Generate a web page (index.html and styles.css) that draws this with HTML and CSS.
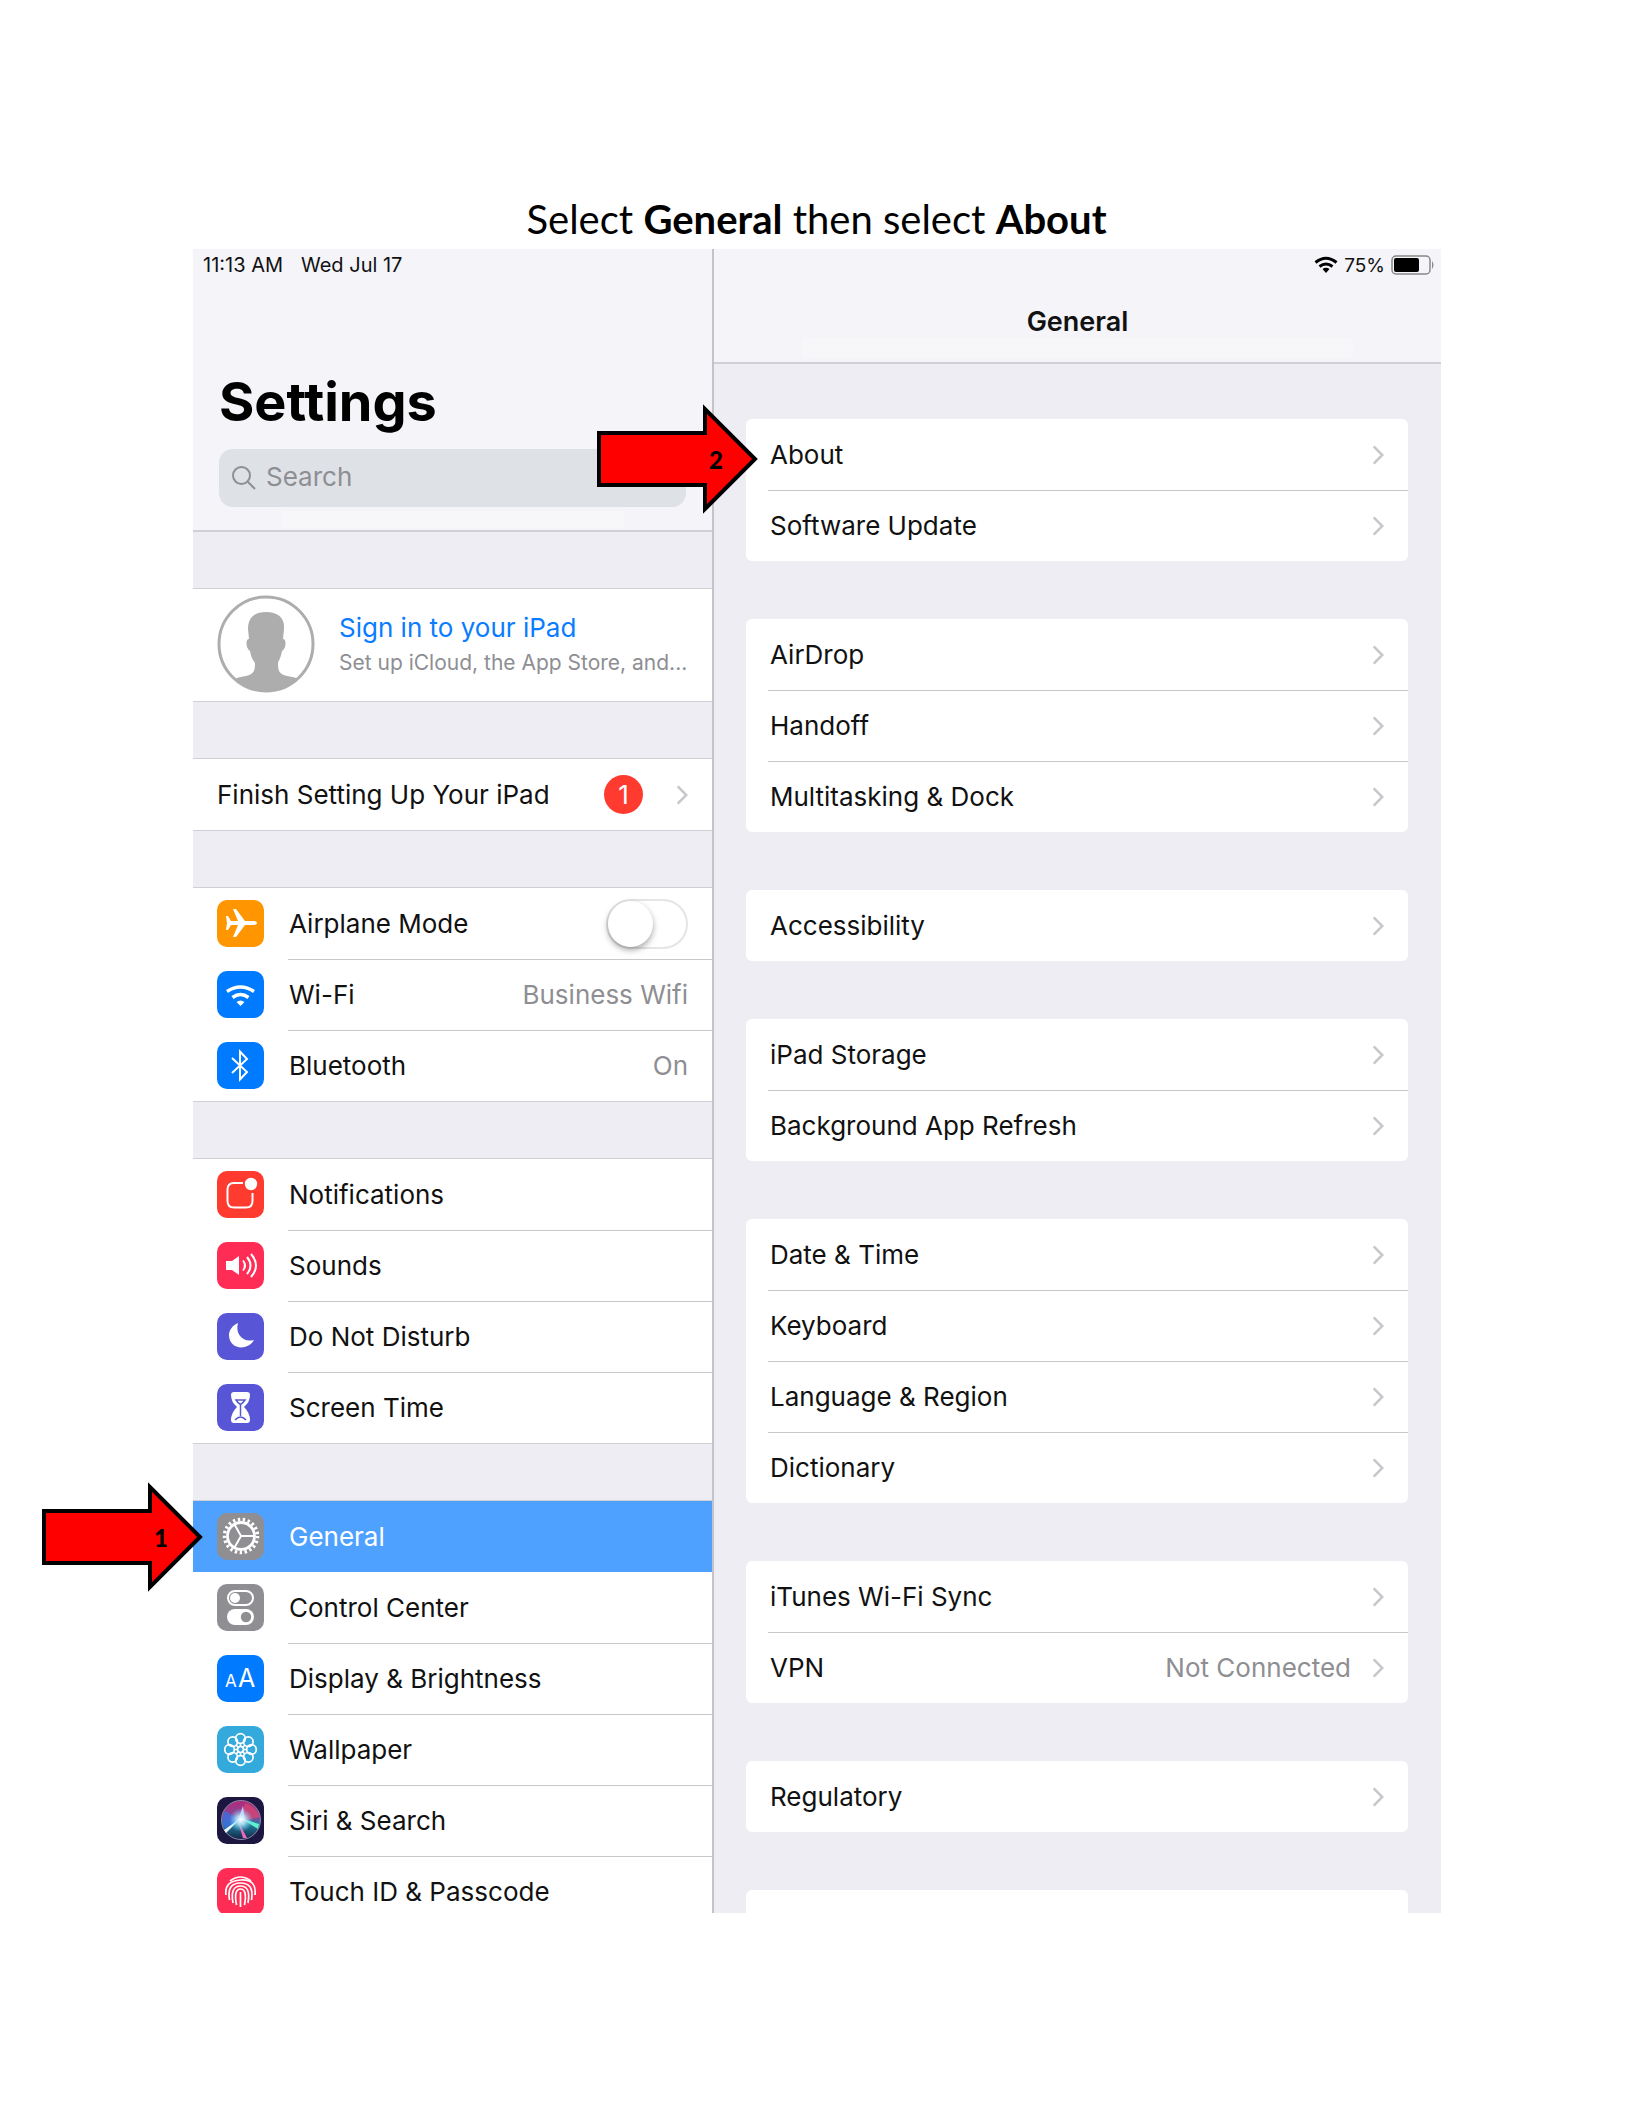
FILE: index.html
```html
<!DOCTYPE html>
<html lang="en">
<head>
    <meta charset="UTF-8">
    <title>Select General then select About</title>
    <meta name="viewport" content="width=device-width, initial-scale=1">
    <link rel="stylesheet" href="styles.css">
</head>
<body>
<svg class="defs" aria-hidden="true">
    <symbol id="chevron" viewBox="0 0 14 24"><path d="M2 2l10 10L2 22" fill="none" stroke="#c7c7cc" stroke-width="3"/></symbol>
    <symbol id="arrow" viewBox="0 0 160 108" overflow="visible"><path d="M2 28h106V4l50 50-50 50V80H2z" fill="#f00" stroke="#000" stroke-width="4"/></symbol>
</svg>

<h1 class="caption">Select <b>General</b> then select <b>About</b></h1>

<main class="stage">
<div class="screen">
    <!-- left column -->
    <aside class="sidebar">
        <header class="side-head">
            <div class="status"><span>11:13 AM</span><span>Wed Jul 17</span></div>
            <h2>Settings</h2>
            <label class="search">
                <svg width="26" height="26" viewBox="0 0 26 26" fill="none" stroke="#8e8e93" stroke-width="2"><circle cx="10.500" cy="10.500" r="8.500"/><path d="M17 17l7 7"/></svg>
                <input type="search" placeholder="Search" aria-label="Search">
            </label>
            <div class="sheen"></div>
        </header>

        <div class="group">
            <a class="profile" href="#">
                <svg width="98" height="98" viewBox="0 0 98 98">
                    <clipPath id="face"><circle cx="49" cy="49" r="47"/></clipPath>
                    <path clip-path="url(#face)" fill="#adadad" d="M49 17c12 0 19 6 18 17l-1 10c4 0 3 10-1 12-1 6-3 9-4 12 0 8 1 11 9 13 8 1 12 3 16 6v15H13V87c4-3 8-5 16-6 8-2 9-5 9-13-2-3-4-6-5-12-4-2-5-12-1-12l-1-10c0-12 7-17 18-17z"/>
                    <circle cx="49" cy="49" r="47" fill="none" stroke="#adadad" stroke-width="3"/>
                </svg>
                <span class="who"><span class="signin">Sign in to your iPad</span><small>Set up iCloud, the App Store, and...</small></span>
            </a>
        </div>

        <div class="group">
            <a class="row" href="#"><span class="label">Finish Setting Up Your iPad</span><span class="badge">1</span><svg class="chev"><use href="#chevron"/></svg></a>
        </div>

        <div class="group">
            <div class="row">
                <svg class="icon orange" viewBox="0 0 47 47"><path fill="#fff" d="M40 23c0 1.300-1.500 2-3 2h-9l-9 12h-3l5-12h-7l-3 5h-2l1-7-1-7h2l3 5h7L16 9h3l9 12h9c1.500 0 3 .7 3 2z"/></svg>
                <label class="label" for="airplane">Airplane Mode</label>
                <input class="toggle" type="checkbox" id="airplane">
            </div>
            <a class="row" href="#">
                <svg class="icon blue" viewBox="0 0 47 47"><g fill="none" stroke="#fff" stroke-width="3.500"><path d="M10 20.500q13.500-9 27 0"/><path d="M15.500 26.500q8-6 16 0"/></g><path fill="#fff" d="M19.500 31q4-3 8 0l-4 4z"/></svg>
                <span class="label">Wi-Fi</span><span class="value">Business Wifi</span>
            </a>
            <a class="row" href="#">
                <svg class="icon blue" viewBox="0 0 47 47"><path fill="none" stroke="#fff" stroke-width="2" d="M15 16l15 14-7 7.500v-28l7 7.500L15 31"/></svg>
                <span class="label">Bluetooth</span><span class="value">On</span>
            </a>
        </div>

        <div class="group">
            <a class="row" href="#">
                <svg class="icon red" viewBox="0 0 47 47"><path fill="none" stroke="#fff" stroke-width="2" d="M26 12h-9q-6.500 0-6.500 6.500V30q0 6.500 6.500 6.500h12q6.500 0 6.500-6.500v-8"/><circle cx="34" cy="13" r="6.200" fill="#fff"/></svg>
                <span class="label">Notifications</span>
            </a>
            <a class="row" href="#">
                <svg class="icon pink" viewBox="0 0 47 47"><path fill="#fff" d="M9 19h6l7-5v19l-7-5H9z"/><g fill="none" stroke="#fff" stroke-width="2"><path d="M26 18.500q4 5 0 10"/><path d="M30 15q7 8.500 0 17"/><path d="M34 12q10 11.500 0 23"/></g></svg>
                <span class="label">Sounds</span>
            </a>
            <a class="row" href="#">
                <svg class="icon purple" viewBox="0 0 47 47"><path fill="#fff" d="M21 10c-3 10 4 20 16 17C31 38 12 37 12 22c0-5 4-10 9-12z"/></svg>
                <span class="label">Do Not Disturb</span>
            </a>
            <a class="row" href="#">
                <svg class="icon purple" viewBox="0 0 47 47"><path fill="#fff" d="M17 8h13q3 0 3 3 0 7-6 12 6 6 6 13 0 3-3 3H17q-3 0-3-3 0-7 6-13-6-5-6-12 0-3 3-3z"/><path d="M19 16q2 3 4.500 4.500Q26 19 28 16zm4.500 5v11M18 36q5.500-6 11 0" fill="none" stroke="#5856d6" stroke-width="1.500"/></svg>
                <span class="label">Screen Time</span>
            </a>
        </div>

        <div class="group">
            <a class="row active" href="#">
                <svg class="icon gray" viewBox="0 0 47 47"><g fill="none" stroke="#fff"><circle cx="24" cy="23" r="16.500" stroke-width="3.500" stroke-dasharray="2.400 2.536"/><circle cx="24" cy="23" r="13.500" stroke-width="2.800"/><path stroke-width="2" d="M24 23h13M24 23l-6.500-11.500M24 23l-6.500 11.500"/></g></svg>
                <span class="label">General</span>
            </a>
            <a class="row" href="#">
                <svg class="icon gray" viewBox="0 0 47 47"><rect x="11" y="7" width="25" height="14" rx="7" fill="none" stroke="#fff" stroke-width="2"/><circle cx="18" cy="14" r="5" fill="#fff"/><rect x="10" y="25" width="27" height="16" rx="8" fill="#fff"/><circle cx="29" cy="33" r="5.200" fill="#8e8e93"/></svg>
                <span class="label">Control Center</span>
            </a>
            <a class="row" href="#">
                <svg class="icon blue" viewBox="0 0 47 47"><text x="8" y="32" class="aa-small">A</text><text x="21" y="32" class="aa-big">A</text></svg>
                <span class="label">Display &amp; Brightness</span>
            </a>
            <a class="row" href="#">
                <svg class="icon sky" viewBox="0 0 47 47"><g fill="none" stroke="#fff" stroke-width="1.700"><circle cx="23.500" cy="12.500" r="4.800"/><circle cx="31.300" cy="15.700" r="4.800"/><circle cx="34.500" cy="23.500" r="4.800"/><circle cx="31.300" cy="31.300" r="4.800"/><circle cx="23.500" cy="34.500" r="4.800"/><circle cx="15.700" cy="31.300" r="4.800"/><circle cx="12.500" cy="23.500" r="4.800"/><circle cx="15.700" cy="15.700" r="4.800"/><circle cx="23.500" cy="23.500" r="3"/><path d="M23.500 17v4M23.500 26v4M17 23.500h4M26 23.500h4M19 19l3 3M28 19l-3 3M19 28l3-3M28 28l-3-3"/></g></svg>
                <span class="label">Wallpaper</span>
            </a>
            <a class="row" href="#">
                <svg class="icon siri" viewBox="0 0 47 47">
                    <defs>
                        <linearGradient id="orb" x1="0" y1="0" x2="0" y2="1"><stop offset="0" stop-color="#b02a78"/><stop offset=".45" stop-color="#7f4c9c"/><stop offset=".6" stop-color="#1f7f9c"/><stop offset="1" stop-color="#142448"/></linearGradient>
                        <radialGradient id="glow"><stop offset="0" stop-color="#fff"/><stop offset=".4" stop-color="#bdefff" stop-opacity=".8"/><stop offset="1" stop-color="#6cf" stop-opacity="0"/></radialGradient>
                    </defs>
                    <circle cx="24" cy="23" r="19.500" fill="url(#orb)" stroke="#8d86a8"/>
                    <path fill="#3b6fe0" opacity=".8" d="M24 24L8 14q-5 10 0 18z"/>
                    <path fill="#e0446e" d="M24 24l4-18q12 4 15 14z" opacity=".7"/>
                    <path fill="#5ff0d0" d="M23 21l19 6-1 5z"/>
                    <path fill="#e8f6ff" d="M24 21L7 33l2 3z"/>
                    <path fill="#f06ab8" d="M21 24l5 17h4z"/>
                    <path fill="#e6c6ff" d="M21 23l5-14 2 14z"/>
                    <circle cx="24" cy="23" r="12" fill="url(#glow)"/>
                </svg>
                <span class="label">Siri &amp; Search</span>
            </a>
            <a class="row" href="#">
                <svg class="icon pink" viewBox="0 0 47 47"><g fill="none" stroke="#fff" stroke-width="1.700"><path d="M13 13q10.500-8 21 0"/><path d="M9 27q-2-14 14.500-15T38 27"/><path d="M12.500 32q-3-17 11-17t11 17"/><path d="M16 35q-3-17 7.500-17T31 35"/><path d="M19.500 37q-3-16 4-16t4 16"/><path d="M23.500 24v15"/></g></svg>
                <span class="label">Touch ID &amp; Passcode</span>
            </a>
        </div>
    </aside>

    <!-- right column -->
    <section class="detail">
        <header class="detail-head">
            <div class="status right">
                <svg width="24" height="18" viewBox="0 0 24 18"><g fill="none" stroke="#000" stroke-width="3"><path d="M1.500 6.500q10.500-8.500 21 0"/><path d="M5.500 10.500q6.500-5 13 0"/></g><path d="M8.500 13q3.500-2.500 7 0L12 17z"/></svg>
                <span>75%</span>
                <svg width="44" height="20" viewBox="0 0 44 20"><rect x="1" y="1" width="38" height="18" rx="4" fill="none" stroke="#888" stroke-width="1.500"/><rect x="3" y="3" width="25" height="14" rx="2"/><path d="M41 6q3 4 0 8z" fill="#888"/></svg>
            </div>
            <h3>General</h3>
            <div class="sheen"></div>
        </header>

        <div class="cards">
            <div class="card">
                <a class="row" href="#"><span class="label">About</span><svg class="chev"><use href="#chevron"/></svg></a>
                <a class="row" href="#"><span class="label">Software Update</span><svg class="chev"><use href="#chevron"/></svg></a>
            </div>
            <div class="card">
                <a class="row" href="#"><span class="label">AirDrop</span><svg class="chev"><use href="#chevron"/></svg></a>
                <a class="row" href="#"><span class="label">Handoff</span><svg class="chev"><use href="#chevron"/></svg></a>
                <a class="row" href="#"><span class="label">Multitasking &amp; Dock</span><svg class="chev"><use href="#chevron"/></svg></a>
            </div>
            <div class="card">
                <a class="row" href="#"><span class="label">Accessibility</span><svg class="chev"><use href="#chevron"/></svg></a>
            </div>
            <div class="card">
                <a class="row" href="#"><span class="label">iPad Storage</span><svg class="chev"><use href="#chevron"/></svg></a>
                <a class="row" href="#"><span class="label">Background App Refresh</span><svg class="chev"><use href="#chevron"/></svg></a>
            </div>
            <div class="card">
                <a class="row" href="#"><span class="label">Date &amp; Time</span><svg class="chev"><use href="#chevron"/></svg></a>
                <a class="row" href="#"><span class="label">Keyboard</span><svg class="chev"><use href="#chevron"/></svg></a>
                <a class="row" href="#"><span class="label">Language &amp; Region</span><svg class="chev"><use href="#chevron"/></svg></a>
                <a class="row" href="#"><span class="label">Dictionary</span><svg class="chev"><use href="#chevron"/></svg></a>
            </div>
            <div class="card">
                <a class="row" href="#"><span class="label">iTunes Wi-Fi Sync</span><svg class="chev"><use href="#chevron"/></svg></a>
                <a class="row" href="#"><span class="label">VPN</span><span class="value">Not Connected</span><svg class="chev"><use href="#chevron"/></svg></a>
            </div>
            <div class="card">
                <a class="row" href="#"><span class="label">Regulatory</span><svg class="chev"><use href="#chevron"/></svg></a>
            </div>
            <div class="card"><div class="row"></div></div>
        </div>
    </section>
</div>

<!-- step markers -->
<div class="step step-1"><svg><use href="#arrow"/></svg><b>1</b></div>
<div class="step step-2"><svg><use href="#arrow"/></svg><b>2</b></div>
</main>
</body>
</html>
```

FILE: styles.css
```css
* { box-sizing: border-box; }
body { margin: 0; background: #fff; color: #000; font-family: Inter, "Liberation Sans", sans-serif; font-size: 26px; }
a { color: inherit; text-decoration: none; }
h1, h2, h3 { margin: 0; }
svg { display: block; flex: none; }
.defs { position: absolute; width: 0; height: 0; }

.caption { padding-top: 189px; font: 40px/60px Lato, Carlito, sans-serif; text-align: center; }
.caption b { font-weight: 700; }

.stage { position: relative; margin: 0 192px 0 193px; }
.screen { display: grid; grid-template-columns: 521px 1fr; grid-template-rows: 100%; aspect-ratio: 3 / 4; overflow: hidden; background: #eeedf3; }

/* headers */
.status { display: flex; gap: 18px; align-items: center; height: 32px; padding-left: 10px; font-size: 20px; color: #111; }
.status.right { justify-content: flex-end; gap: 6px; padding-right: 6px; font-size: 19px; }
.side-head { height: 283px; background: #f4f4f9; border-bottom: 2px solid #d0cfd5; }
.side-head h2 { margin-top: 87px; padding-left: 26px; font-size: 54px; line-height: 68px; }
.search { display: flex; align-items: center; gap: 9px; height: 58px; margin: 13px 26px 0; padding-left: 12px; border-radius: 14px; background: #dee1e6; }
.search input { flex: 1; min-width: 0; padding: 0 0 3px; border: 0; outline: 0; background: none; font: inherit; }
.search input::placeholder { color: #8e8e93; opacity: 1; }
.side-head .sheen { height: 17px; margin: 4px 88px 0; background: #f7f7fa; }
.detail-head { height: 115px; background: #f4f4f9; border-bottom: 2px solid #d0cfd5; }
.detail-head h3 { margin-top: 25px; font-size: 27px; line-height: 32px; font-weight: 600; text-align: center; color: #111; }
.detail-head .sheen { height: 20px; margin: 0 88px; background: #f7f7f9; }

/* sidebar */
.sidebar { border-right: 2px solid #c4c3ca; }
.group { margin-top: 57px; background: #fff; box-shadow: 0 -1px #d0cfd5, 0 1px #d0cfd5; }
.group + .group { margin-top: 58px; }
.profile { display: flex; gap: 24px; height: 112px; padding: 6px 24px 0; }
.who { display: flex; flex-direction: column; gap: 5px; padding-top: 16px; white-space: nowrap; }
.signin { color: #0a7cff; line-height: 34px; }
.who small { font-size: 21px; line-height: 26px; color: #8e8e93; }
.row { position: relative; display: flex; align-items: center; height: 71px; padding: 0 24px; white-space: nowrap; }
.label { flex: 1; color: #111; }
.value { color: #8e8e93; }
.chev { width: 12px; height: 22px; }
.icon { width: 47px; height: 47px; margin-right: 25px; border-radius: 10px; }
.row + .row::before { content: ""; position: absolute; top: 0; left: 95px; right: 0; height: 1px; background: #c8c7cc; }
.badge { width: 39px; height: 39px; margin-right: 33px; border-radius: 50%; background: #ff3b30; color: #fff; line-height: 39px; text-align: center; }
.row.active { background: #4fa1ff; }
.row.active .label { color: #fff; }
.row.active + .row::before { display: none; }
.toggle { appearance: none; width: 82px; height: 50px; margin: 0; border: 2px solid #e5e5e5; border-radius: 25px; background: #fff; }
.toggle::before { content: ""; display: block; width: 45px; height: 46px; border-radius: 50%; background: #fff; box-shadow: 0 3px 6px rgba(0,0,0,0.35); }
.toggle:checked { background: #4cd964; }
.toggle:checked::before { margin-left: auto; }

.orange { background: #ff9500; }
.blue { background: #007aff; }
.red { background: #ff3b30; }
.pink { background: #ff2d55; }
.purple { background: #5856d6; }
.gray { background: #8e8e93; }
.sky { background: #34aadc; }
.siri { background: #1b1740; }
.aa-small, .aa-big { fill: #fff; font-size: 17px; }
.aa-big { font-size: 25px; }

/* cards */
.cards { display: flex; flex-direction: column; gap: 58px; padding: 55px 33px 0 32px; }
.card { flex: none; border-radius: 6px; background: #fff; }
.card .row + .row::before { left: 22px; }
.card .value { margin-right: 21px; }

.step { position: absolute; width: 160px; height: 108px; }
.step svg { width: 100%; height: 100%; overflow: visible; }
.step b { position: absolute; top: 40px; right: 34px; font: 900 24px/30px Lato, sans-serif; }
.step-1 { left: -151px; top: 1234px; }
.step-2 { left: 404px; top: 156px; }
```
